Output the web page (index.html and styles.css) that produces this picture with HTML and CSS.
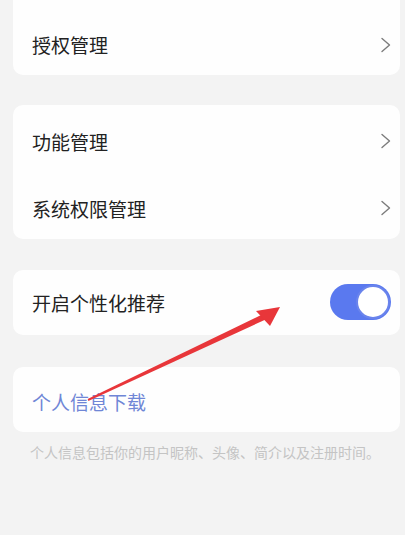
FILE: index.html
```html
<!DOCTYPE html>
<html lang="zh">
<head>
<meta charset="utf-8">
<link rel="stylesheet" href="styles.css">
</head>
<body>
<div class="page">
  <div class="card card-top">
    <div class="row row-first">
      <span class="label">授权管理</span>
      <svg class="chev" viewBox="0 0 11 16" width="11" height="16"><path d="M2 1.5 L9.5 8 L2 14.5" fill="none" stroke="#7c7c7c" stroke-width="1.4" stroke-linecap="round" stroke-linejoin="round"/></svg>
    </div>
  </div>
  <div class="card">
    <div class="row row-a">
      <span class="label">功能管理</span>
      <svg class="chev" viewBox="0 0 11 16" width="11" height="16"><path d="M2 1.5 L9.5 8 L2 14.5" fill="none" stroke="#7c7c7c" stroke-width="1.4" stroke-linecap="round" stroke-linejoin="round"/></svg>
    </div>
    <div class="row row-b">
      <span class="label">系统权限管理</span>
      <svg class="chev" viewBox="0 0 11 16" width="11" height="16"><path d="M2 1.5 L9.5 8 L2 14.5" fill="none" stroke="#7c7c7c" stroke-width="1.4" stroke-linecap="round" stroke-linejoin="round"/></svg>
    </div>
  </div>
  <div class="card card-toggle">
    <div class="row row-single">
      <span class="label">开启个性化推荐</span>
      <span class="toggle"><span class="knob"></span></span>
    </div>
  </div>
  <div class="card card-link">
    <div class="row row-single">
      <span class="label link">个人信息下载</span>
    </div>
  </div>
  <p class="caption">个人信息包括你的用户昵称、头像、简介以及注册时间。</p>
</div>
<svg class="arrow" viewBox="0 0 405 535" width="405" height="535">
  <polygon points="88.4,400.9 87.6,399.1 264.7,313.3 267.3,318.7" fill="#e8363a"/>
  <polygon points="280,307 256,311 270,326" fill="#e8363a"/>
</svg>
</body>
</html>
```

FILE: styles.css
```css
html, body {
  margin: 0;
  padding: 0;
}
body {
  background: #f3f3f3;
  font-family: "Noto Sans CJK SC", "Noto Sans", sans-serif;
  width: 405px;
  height: 535px;
  overflow: hidden;
  position: relative;
}
.page {
  padding: 0 5px 0 13px;
  display: flex;
  flex-direction: column;
}
.card {
  background: #fefefe;
  border-radius: 10px;
  margin-top: 30px;
  display: flex;
  flex-direction: column;
}
.card-top {
  margin-top: 0;
  border-radius: 0 0 10px 10px;
}
.card-toggle {
  margin-top: 31px;
}
.card-link {
  margin-top: 32px;
}
.row {
  display: flex;
  align-items: center;
  justify-content: space-between;
  padding: 0 9px 0 19px;
  box-sizing: border-box;
}
.row-first {
  height: 75px;
  padding-top: 14px;
}
.row-a {
  height: 72px;
}
.row-b {
  height: 62px;
}
.row-single {
  height: 65px;
}
.label {
  font-size: 19px;
  color: #222;
  line-height: 1;
}
.link {
  color: #6f86d6;
  padding-top: 4px;
}
.chev {
  display: block;
}
.toggle {
  width: 61px;
  height: 36px;
  border-radius: 18px;
  background: #5a79ef;
  position: relative;
  margin-right: 0;
  margin-top: -2px;
}
.knob {
  position: absolute;
  right: 1px;
  top: 1px;
  width: 30px;
  height: 30px;
  border-radius: 50%;
  background: #fff;
  border: 2px solid #6a84ec;
}
.caption {
  margin: 11px 0 0 17px;
  font-size: 14px;
  line-height: 18px;
  color: #c4c4c4;
  white-space: nowrap;
}
.arrow {
  position: absolute;
  left: 0;
  top: 0;
  pointer-events: none;
}
```
